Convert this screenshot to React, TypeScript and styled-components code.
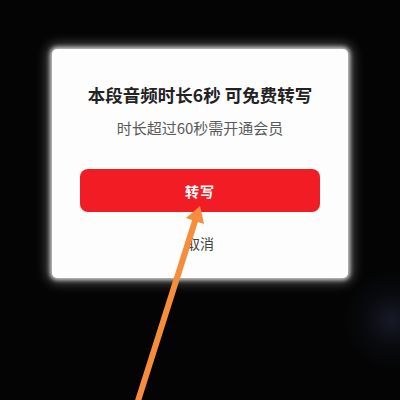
import React from 'react';
import styled, { createGlobalStyle } from 'styled-components';

const GlobalStyle = createGlobalStyle`
  html, body {
    margin: 0;
    padding: 0;
    background: #040404;
  }
  * { box-sizing: border-box; }
`;

const Screen = styled.div`
  position: relative;
  width: 400px;
  height: 400px;
  overflow: hidden;
  background:
    radial-gradient(circle at 392px 320px, rgba(44, 52, 78, 0.45) 0, rgba(26, 32, 50, 0.2) 28px, rgba(0, 0, 0, 0) 50px),
    #040404;
  display: flex;
  flex-direction: column;
  align-items: center;
  padding-top: 49px;
  font-family: "Noto Sans CJK SC", "Noto Sans", sans-serif;
`;

const Dialog = styled.div`
  width: 296px;
  height: 229px;
  background: #fdfdfd;
  border-radius: 5px;
  box-shadow: 0 0 4px 2px rgba(255, 255, 255, 0.75), 0 0 12px 5px rgba(255, 255, 255, 0.3);
  display: flex;
  flex-direction: column;
  align-items: center;
  padding: 34px 28px 0;
`;

const Title = styled.h2`
  margin: 0;
  font-size: 17.5px;
  line-height: 24px;
  font-weight: 700;
  color: #222;
  white-space: nowrap;
`;

const Subtitle = styled.p`
  margin: 10px 0 0;
  font-size: 15px;
  line-height: 22px;
  color: #5a5a5a;
`;

const ConfirmButton = styled.button`
  margin-top: 30px;
  width: 100%;
  height: 43px;
  border: none;
  border-radius: 8px;
  background: #f21d24;
  color: #fff;
  font-family: inherit;
  font-size: 14px;
  font-weight: 600;
  letter-spacing: 1px;
`;

const CancelText = styled.span`
  margin-top: 20px;
  font-size: 14px;
  line-height: 22px;
  color: #444;
`;

const ArrowLayer = styled.svg`
  position: absolute;
  left: 0;
  top: 0;
  width: 400px;
  height: 400px;
  pointer-events: none;
`;

export default function App() {
  return (
    <>
      <GlobalStyle />
      <Screen>
        <Dialog>
          <Title>本段音频时长6秒 可免费转写</Title>
          <Subtitle>时长超过60秒需开通会员</Subtitle>
          <ConfirmButton>转写</ConfirmButton>
          <CancelText>取消</CancelText>
        </Dialog>
        <ArrowLayer viewBox="0 0 400 400">
          <line x1="137" y1="404" x2="196" y2="218" stroke="#f58d3c" strokeWidth="6" />
          <polygon points="200,206 204,224 186,218" fill="#f58d3c" />
        </ArrowLayer>
      </Screen>
    </>
  );
}
